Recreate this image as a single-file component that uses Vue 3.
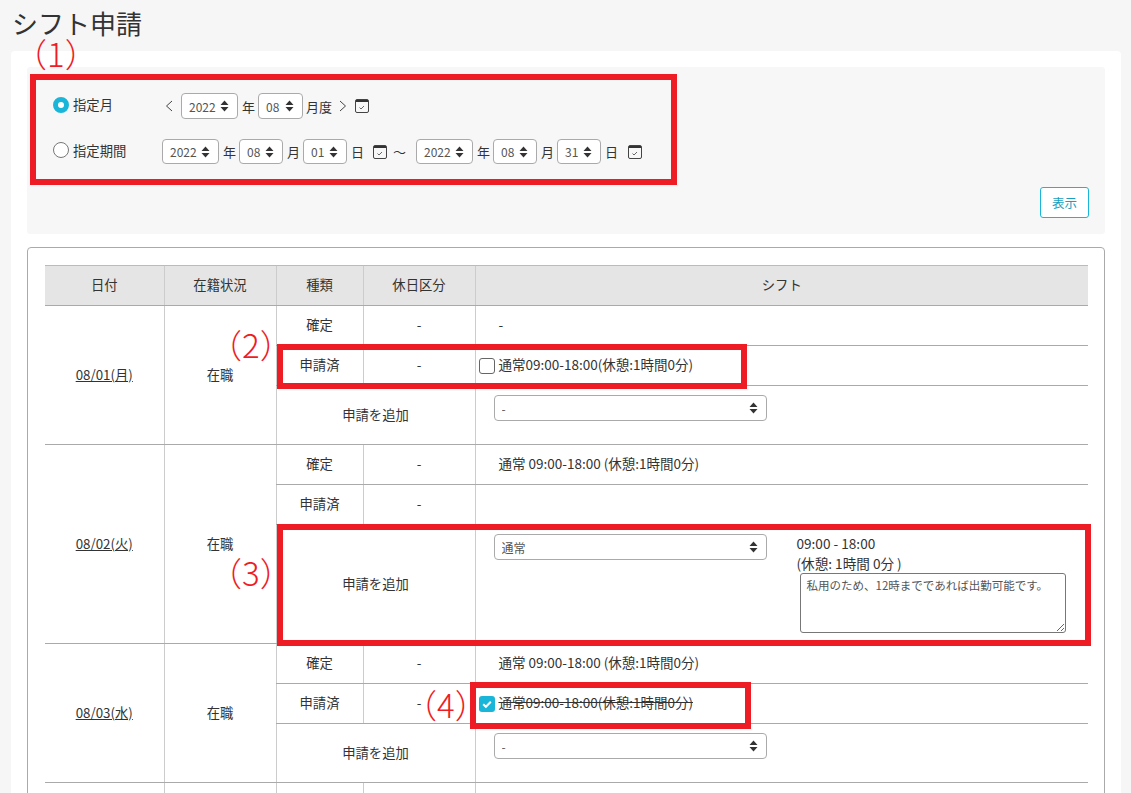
<script setup>
const groups = [
  { date: '08/01(月)', confirmed: '-', applied: '通常09:00-18:00(休憩:1時間0分)', check: 'off', add: '-', tall: false },
  { date: '08/02(火)', confirmed: '通常 09:00-18:00 (休憩:1時間0分)', applied: '', check: '', add: '通常', tall: true },
  { date: '08/03(水)', confirmed: '通常 09:00-18:00 (休憩:1時間0分)', applied: '通常09:00-18:00(休憩:1時間0分)', check: 'on', add: '-', tall: false },
  { date: '08/04(木)', confirmed: '-', applied: '', check: '', add: '-', tall: false }
]
const redBoxes = [
  { cls: 'box1' }, { cls: 'box2' }, { cls: 'box3' }, { cls: 'box4' }
]
const marks = [
  { cls: 'm1', text: '（1）' }, { cls: 'm2', text: '（2）' }, { cls: 'm3', text: '（3）' }, { cls: 'm4', text: '（4）' }
]
</script>

<template>
  <div class="page">
    <h1 class="title">シフト申請</h1>
    <div class="card">
      <section class="filter">
        <div class="row row1">
          <label class="choice">
            <span class="radio on"></span>
            <span>指定月</span>
          </label>
          <svg class="chev first" width="8" height="12" viewBox="0 0 8 12"><path d="M7 1 1.500 6 7 11" fill="none" stroke="#444" stroke-width="1"/></svg>
          <span class="sel w57"><select><option>2022</option></select><svg class="caret" width="9" height="12" viewBox="0 0 9 12"><path d="M4.500 0.500 8.500 5H.5zM.5 7h8l-4 4.500z" fill="#333"/></svg></span>
          <span class="unit">年</span>
          <span class="sel w45"><select><option>08</option></select><svg class="caret" width="9" height="12" viewBox="0 0 9 12"><path d="M4.500 0.500 8.500 5H.5zM.5 7h8l-4 4.500z" fill="#333"/></svg></span>
          <span class="unit tight">月度</span>
          <svg class="chev next" width="8" height="12" viewBox="0 0 8 12"><path d="M1 1 6.500 6 1 11" fill="none" stroke="#444" stroke-width="1"/></svg>
          <svg class="cal c1" width="14" height="14" viewBox="0 0 14 14"><rect x=".5" y=".5" width="13" height="13" rx="1.500" fill="none" stroke="#444"/><path d="M1 2h12" stroke="#333" stroke-width="2" fill="none"/><path d="M4.500 8.500 6 10 9 7" fill="none" stroke="#666" stroke-width="1"/></svg>
        </div>
        <div class="row row2">
          <label class="choice">
            <span class="radio"></span>
            <span>指定期間</span>
          </label>
          <span class="sel w57"><select><option>2022</option></select><svg class="caret" width="9" height="12" viewBox="0 0 9 12"><path d="M4.500 0.500 8.500 5H.5zM.5 7h8l-4 4.500z" fill="#333"/></svg></span>
          <span class="unit">年</span>
          <span class="sel w44"><select><option>08</option></select><svg class="caret" width="9" height="12" viewBox="0 0 9 12"><path d="M4.500 0.500 8.500 5H.5zM.5 7h8l-4 4.500z" fill="#333"/></svg></span>
          <span class="unit">月</span>
          <span class="sel w44"><select><option>01</option></select><svg class="caret" width="9" height="12" viewBox="0 0 9 12"><path d="M4.500 0.500 8.500 5H.5zM.5 7h8l-4 4.500z" fill="#333"/></svg></span>
          <span class="unit">日</span>
          <svg class="cal c2" width="14" height="14" viewBox="0 0 14 14"><rect x=".5" y=".5" width="13" height="13" rx="1.500" fill="none" stroke="#444"/><path d="M1 2h12" stroke="#333" stroke-width="2" fill="none"/><path d="M4.500 8.500 6 10 9 7" fill="none" stroke="#666" stroke-width="1"/></svg>
          <span class="tilde">～</span>
          <span class="sel w57"><select><option>2022</option></select><svg class="caret" width="9" height="12" viewBox="0 0 9 12"><path d="M4.500 0.500 8.500 5H.5zM.5 7h8l-4 4.500z" fill="#333"/></svg></span>
          <span class="unit">年</span>
          <span class="sel w44"><select><option>08</option></select><svg class="caret" width="9" height="12" viewBox="0 0 9 12"><path d="M4.500 0.500 8.500 5H.5zM.5 7h8l-4 4.500z" fill="#333"/></svg></span>
          <span class="unit">月</span>
          <span class="sel w44"><select><option>31</option></select><svg class="caret" width="9" height="12" viewBox="0 0 9 12"><path d="M4.500 0.500 8.500 5H.5zM.5 7h8l-4 4.500z" fill="#333"/></svg></span>
          <span class="unit">日</span>
          <svg class="cal c3" width="14" height="14" viewBox="0 0 14 14"><rect x=".5" y=".5" width="13" height="13" rx="1.500" fill="none" stroke="#444"/><path d="M1 2h12" stroke="#333" stroke-width="2" fill="none"/><path d="M4.500 8.500 6 10 9 7" fill="none" stroke="#666" stroke-width="1"/></svg>
        </div>
        <div class="actions"><button class="show" type="button">表示</button></div>
      </section>

      <section class="wrap">
        <table class="shift">
          <colgroup>
            <col class="c-date"><col class="c-status"><col class="c-kind"><col class="c-off"><col>
          </colgroup>
          <thead>
            <tr>
              <th>日付</th><th>在籍状況</th><th>種類</th><th>休日区分</th><th>シフト</th>
            </tr>
          </thead>
          <tbody v-for="g in groups" :key="g.date">
            <tr class="r40">
              <td class="span" rowspan="3"><a class="date">{{ g.date }}</a></td>
              <td class="span" rowspan="3">在職</td>
              <td>確定</td>
              <td>-</td>
              <td class="left indent">{{ g.confirmed }}</td>
            </tr>
            <tr class="r40">
              <td>申請済</td>
              <td>-</td>
              <td class="left">
                <label v-if="g.check" class="applied">
                  <span class="check" :class="{ on: g.check === 'on' }">
                    <svg v-if="g.check === 'on'" width="16" height="16" viewBox="0 0 16 16"><path d="M4.200 8.300 6.900 10.800 11.800 5.800" fill="none" stroke="#fff" stroke-width="2"/></svg>
                  </span>
                  <span :class="{ strike: g.check === 'on' }">{{ g.applied }}</span>
                </label>
              </td>
            </tr>
            <tr :class="g.tall ? 'r119' : 'r59'">
              <td class="span" colspan="2">申請を追加</td>
              <td class="left top">
                <div class="addrow">
                  <span class="sel wide"><select><option>{{ g.add }}</option></select><svg class="caret" width="9" height="12" viewBox="0 0 9 12"><path d="M4.500 0.500 8.500 5H.5zM.5 7h8l-4 4.500z" fill="#333"/></svg></span>
                  <div v-if="g.tall" class="detail">
                    <div class="dline">09:00 - 18:00</div>
                    <div class="dline">(休憩: 1時間 0分 )</div>
                    <textarea class="note">私用のため、12時までであれば出勤可能です。</textarea>
                  </div>
                </div>
              </td>
            </tr>
          </tbody>
        </table>
      </section>
    </div>

    <div v-for="b in redBoxes" :key="b.cls" class="redbox" :class="b.cls"></div>
    <div v-for="m in marks" :key="m.cls" class="mark" :class="m.cls">{{ m.text }}</div>
  </div>
</template>

<style>
html, body { margin: 0; background: #f6f6f6; overflow: hidden; }
</style>

<style scoped>
.page {
  position: relative;
  height: 793px;
  overflow: hidden;
  background: #f6f6f6;
  color: #333;
  font-family: "Noto Sans CJK JP", "Noto Sans", sans-serif;
  font-size: 13.330px;
}
.title {
  margin: 0;
  height: 51px;
  padding: 5px 0 0 12px;
  box-sizing: border-box;
  font-size: 26px;
  line-height: 36px;
  font-weight: 400;
}
.card {
  margin: 0 10px 0 11px;
  padding: 16px;
  background: #fff;
  border-radius: 4px;
}
.filter {
  background: #f7f7f7;
  border-radius: 3px;
  padding: 26px 16px 16px 26px;
  height: 167px;
  box-sizing: border-box;
}
.row { display: flex; align-items: center; }
.row1 { height: 26px; }
.row2 { height: 25px; margin-top: 20px; }
.choice { display: flex; align-items: center; width: 109px; margin-bottom: 3px; }
.radio {
  width: 16px;
  height: 16px;
  box-sizing: border-box;
  border: 1px solid #777;
  border-radius: 50%;
  background: #fff;
  margin-right: 4px;
}
.radio.on { border: 5px solid #1ab6d9; background: #fff; }
.sel { position: relative; display: inline-block; height: 100%; }
.sel select {
  appearance: none;
  width: 100%;
  height: 100%;
  box-sizing: border-box;
  border: 1px solid #aaa;
  border-radius: 4px;
  background: #fff;
  padding: 0 7px;
  font: inherit;
  font-size: 12px;
  color: #555;
}
.caret { position: absolute; right: 9px; top: 50%; margin-top: -6px; }
.w57 { width: 57px; }
.w45 { width: 45px; }
.w44 { width: 44px; }
.unit { margin: 0 3px 0 4px; font-size: 13px; }
.unit.tight { margin-left: 3px; }
.chev.first { margin-left: 3px; margin-right: 8px; }
.chev.next { margin-left: 4px; }
.cal.c1 { margin-left: 8px; }
.cal.c2 { margin-left: 6px; }
.cal.c3 { margin-left: 7px; }
.tilde { width: 13px; margin: 0 10px 0 6px; font-size: 13px; }
.actions { display: flex; justify-content: flex-end; margin-top: 23px; }
.show {
  width: 49px;
  height: 31px;
  padding: 0;
  border: 1px solid #1ab6d9;
  border-radius: 3px;
  background: #fff;
  color: #1a9fc0;
  font: inherit;
  font-size: 12.500px;
}
.wrap {
  margin-top: 13px;
  padding: 17px 16px 17px 17px;
  border: 1px solid #aaa;
  border-radius: 4px;
}
.shift {
  width: 1043px;
  table-layout: fixed;
  border-collapse: collapse;
}
.c-date { width: 119px; }
.c-status { width: 112px; }
.c-kind { width: 87px; }
.c-off { width: 112px; }
th {
  height: 40px;
  padding: 0 0 3px;
  box-sizing: border-box;
  background: #e5e5e5;
  font-weight: 400;
  border-top: 1px solid #bbb;
  border-bottom: 1px solid #aaa;
  border-left: 1px solid #ccc;
}
th:first-child { border-left: 0; }
td {
  padding: 0 0 3px;
  text-align: center;
  vertical-align: middle;
  border-left: 1px solid #ccc;
  border-bottom: 1px solid #aaa;
}
td.span { padding-bottom: 1px; }
tr:first-child td:first-child { border-left: 0; }
.r40 { height: 40px; }
.r59 { height: 59px; }
.r119 { height: 119px; }
.left { text-align: left; font-size: 13.500px; }
.indent { padding-left: 23px; }
.top { vertical-align: top; padding: 9px 0 0 18px; }
.date { text-decoration: underline; }
.applied { display: flex; align-items: center; padding-left: 3px; }
.check {
  width: 16px;
  height: 16px;
  box-sizing: border-box;
  border: 1px solid #666;
  border-radius: 3px;
  background: #fff;
  margin: 3px 4px 0 0;
  flex: none;
}
.check.on { border: 0; background: #1ab6d9; }
.check svg { display: block; }
.strike { text-decoration: line-through; }
.addrow { display: flex; align-items: flex-start; }
.wide { width: 273px; height: 26px; }
.detail { margin-left: 30px; font-size: 13.600px; }
.dline { height: 20px; line-height: 20px; margin-top: -1px; margin-bottom: 1px; }
.note {
  display: block;
  width: 266px;
  height: 60px;
  margin: -1px 0 0 3px;
  box-sizing: border-box;
  border: 1px solid #777;
  border-radius: 3px;
  padding: 3px 6px;
  font: inherit;
  font-size: 11.500px;
  line-height: 1.5;
  color: #555;
  background: #fff;
}
.redbox { position: absolute; box-sizing: border-box; border: 6px solid #ee1c25; pointer-events: none; }
.box1 { left: 30px; top: 74px; width: 647px; height: 111px; }
.box2 { left: 277px; top: 344px; width: 470px; height: 45px; }
.box3 { left: 277px; top: 524px; width: 814px; height: 122px; }
.box4 { left: 470px; top: 682px; width: 281px; height: 47px; }
.mark { position: absolute; color: #ee1c25; font-size: 33px; line-height: 36px; white-space: nowrap; font-family: "Noto Sans CJK JP", sans-serif; font-weight: 300; }
.m1 { left: 14px; top: 35px; }
.m2 { left: 209px; top: 326px; }
.m3 { left: 209px; top: 554px; }
.m4 { left: 404px; top: 686px; }
</style>
